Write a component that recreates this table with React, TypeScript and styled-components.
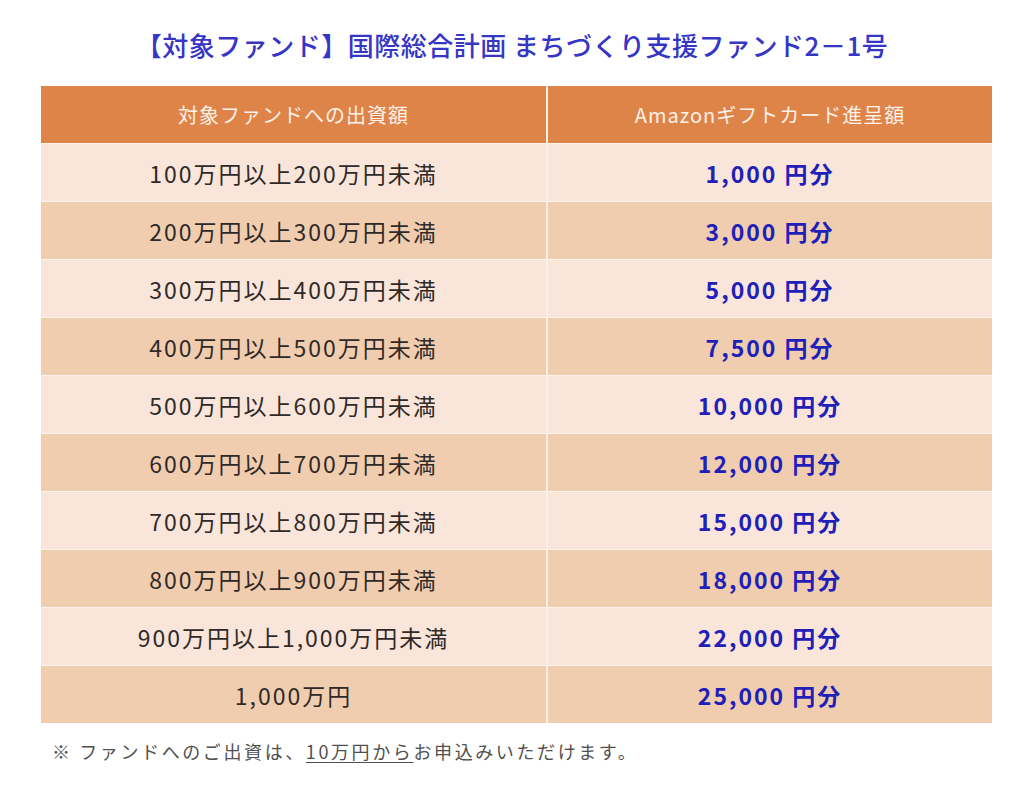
import styled, { createGlobalStyle } from 'styled-components'
import { Fragment } from 'react'

const GlobalStyle = createGlobalStyle`
	body {
		margin: 0;
		background: #ffffff;
		font-family: "Noto Sans CJK JP", "Noto Sans", sans-serif;
	}
`

const Page = styled.div`
	width: 1024px;
	height: 797px;
	padding-top: 27px;
	box-sizing: border-box;
`
const Title = styled.h1`
	margin: 0 0 23px;
	text-align: center;
	font-size: 26px;
	line-height: 36px;
	font-weight: 500;
	color: #3535c6;
	letter-spacing: 0.5px;
`
const Table = styled.div`
	display: grid;
	grid-template-columns: 505px 444px;
	width: 949px;
	margin-left: 41px;
	column-gap: 2px;
	background: #fbefe6;
`
const HeadCell = styled.div`
	height: 57px;
	display: flex;
	align-items: center;
	justify-content: center;
	background: #df8449;
	color: #fdf1e8;
	font-size: 20px;
	font-weight: 400;
	letter-spacing: 1px;
`
const Cell = styled.div<{ $dark: boolean }>`
	height: 57px;
	border-top: 1px solid #fdf4ee;
	display: flex;
	align-items: center;
	justify-content: center;
	background: ${(p) => (p.$dark ? '#f1cdaf' : '#f9e5d9')};
	font-size: 23px;
	letter-spacing: 2px;
	color: #2f2a28;
`
const Amount = styled(Cell)`
	color: #2020b8;
	font-weight: 700;
	font-size: 23px;
	letter-spacing: 2px;

	span {
		margin-left: 7px;
	}
`
const Note = styled.p`
	margin: 16px 0 0 52px;
	font-size: 18px;
	line-height: 24px;
	color: #505050;
	letter-spacing: 2.6px;

	u {
		text-underline-offset: 3px;
	}
`

const rows = [
	['100万円以上200万円未満', '1,000'],
	['200万円以上300万円未満', '3,000'],
	['300万円以上400万円未満', '5,000'],
	['400万円以上500万円未満', '7,500'],
	['500万円以上600万円未満', '10,000'],
	['600万円以上700万円未満', '12,000'],
	['700万円以上800万円未満', '15,000'],
	['800万円以上900万円未満', '18,000'],
	['900万円以上1,000万円未満', '22,000'],
	['1,000万円', '25,000'],
]

function App() {
	return (
		<Page>
			<GlobalStyle />
			<Title>【対象ファンド】国際総合計画 まちづくり支援ファンド2－1号</Title>
			<Table>
				<HeadCell>対象ファンドへの出資額</HeadCell>
				<HeadCell>Amazonギフトカード進呈額</HeadCell>
				{rows.map(([range, gift], i) => (
					<Fragment key={range}>
						<Cell $dark={i % 2 === 1}>{range}</Cell>
						<Amount $dark={i % 2 === 1}>
							{gift}<span>円分</span>
						</Amount>
					</Fragment>
				))}
			</Table>
			<Note>
				※ ファンドへのご出資は、<u>10万円から</u>お申込みいただけます。
			</Note>
		</Page>
	)
}

export default App
